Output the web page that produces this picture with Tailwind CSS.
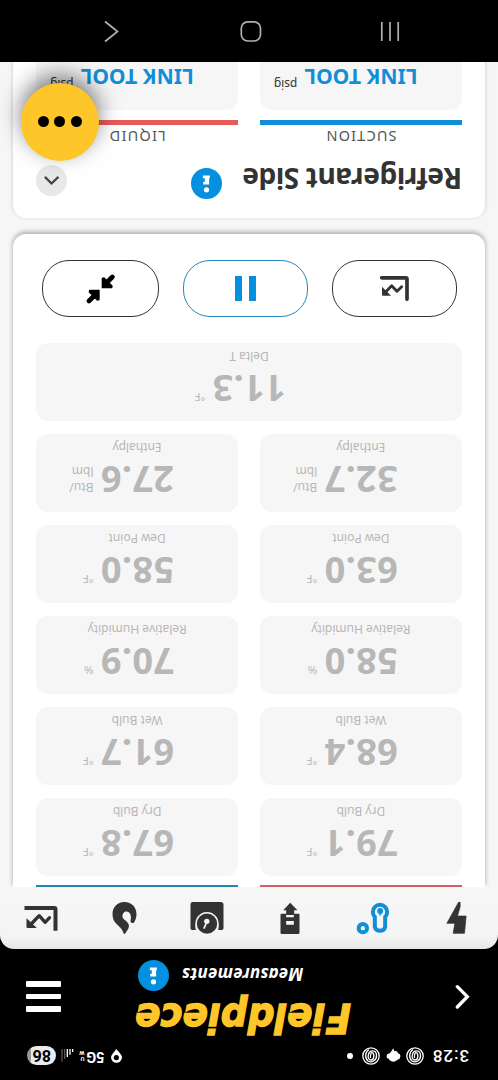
<!DOCTYPE html>
<html lang="en">
<head>
<meta charset="utf-8">
<title>Fieldpiece Measurements</title>
<script src="https://cdn.jsdelivr.net/npm/@tailwindcss/browser@4"></script>
</head>
<body class="bg-black">
<svg class="hidden">
  <symbol id="info" viewBox="573 505 94 94">
    <circle cx="620" cy="552" r="47" fill="#048fdf"/>
    <path fill="#fff" d="M609 528h21v8h-2v19h-18v-8h5v-11h-6z"/>
    <circle cx="620" cy="571" r="8" fill="#fff"/>
  </symbol>
  <symbol id="spiral" viewBox="0 0 18 18">
    <g fill="none" stroke="#fff" stroke-width="1.300"><circle cx="9" cy="9" r="8.200"/><path d="M7 2.500C3 5 2.500 11 6 14C10 16.500 15 13 14.500 8C14 3 8 2.500 6.500 7C5.500 11 7 13 9 13C12 13 12.500 8 11 6C9.500 4.500 8 7 8.500 11"/></g>
  </symbol>
</svg>
<div class="w-[498px] h-[1080px] rotate-180 overflow-hidden bg-black flex flex-col font-['Noto_Sans',sans-serif]">

  <!-- status bar -->
  <div class="h-[40px] shrink-0 pt-[8px] pl-[29px] pr-[27px] flex items-center justify-between text-white">
    <div class="flex items-center">
      <span class="w-[38px] text-[17px] leading-none font-medium tracking-[0.900px] font-[Roboto,sans-serif]">3:28</span>
      <svg class="w-[18px] h-[18px] ml-[6.500px] rotate-180"><use href="#spiral"/></svg>
      <svg class="w-[15px] h-[15px] ml-[5px] rotate-180" viewBox="415 326 46 44"><path fill="#fff" d="M431 336L437 326L441 335Q449 332 452 341Q460 343 459 352Q458 360 450 361Q441 370 430 365Q424 362 424 358Q416 357 417 349Q418 341 426 342Z"/></svg>
      <svg class="w-[18px] h-[18px] ml-[6px] rotate-180"><use href="#spiral"/></svg>
      <span class="size-[6px] rounded-full bg-white ml-[9.500px]"></span>
    </div>
    <div class="flex items-center">
      <svg class="w-[11px] h-[14px] rotate-180" viewBox="327 328 33 42"><path fill="#fff" fill-rule="evenodd" d="M343 328L355 342Q360 348 360 353A16.500 16.500 0 0 1 327 353Q327 348 332 342ZM343 346a8 8 0 1 0 .1 0z"/></svg>
      <span class="ml-[6.500px] w-[18px] text-[14.500px] leading-none font-bold font-[Roboto,sans-serif]">5G</span>
      <span class="ml-[2px] w-[7px] flex flex-col text-[6px] leading-[6.500px] font-bold font-[Roboto,sans-serif]"><span>U</span><span>W</span></span>
      <svg class="w-[13px] h-[13px] ml-[3px] rotate-180" viewBox="185 330 39 39"><path fill="#555" d="M186 330h4v38h-4zM194 330h4v30h-4z"/><path fill="#fff" d="M202 330h4v24h-4zM210 330h4v17h-4zM218 330h4v9h-4z"/></svg>
      <span class="ml-[5px] w-[29.500px] h-[19px] rounded-full bg-linear-to-r from-[#ebebeb] from-85% to-[#999] to-85% text-black text-[16px] leading-[19px] font-bold text-center font-[Roboto,sans-serif]">86</span>
    </div>
  </div>

  <!-- app header -->
  <div class="h-[91px] shrink-0 flex items-start justify-between pl-[28px] pr-[26px]">
    <svg class="w-[15px] h-[25px] mt-[31px] rotate-180" viewBox="621 131 45 75"><path d="M628 139L658 169L628 200" fill="none" stroke="#fff" stroke-width="10" stroke-linecap="round"/></svg>
    <div class="flex flex-col items-center w-[220px] ml-[29px]">
      <svg class="w-[220px] h-[48px] overflow-visible" viewBox="0 0 220 48"><text x="2" y="36" textLength="216" lengthAdjust="spacingAndGlyphs" font-family="'DejaVu Sans',sans-serif" font-weight="bold" font-style="italic" font-size="41" fill="#ffc629" stroke="#ffc629" stroke-width="1.400">Fieldpiece</text></svg>
      <div class="flex items-center w-[220px] pl-[50px] h-[32px]">
        <span class="w-[134px] pt-[3px] text-[17px] leading-[29px] font-bold italic text-white tracking-[0.200px]">Measurements</span>
        <svg class="w-[31px] h-[31px] rotate-180"><use href="#info"/></svg>
      </div>
    </div>
    <div class="flex flex-col gap-[7px] mt-[28px] w-[35px]">
      <span class="h-[5.600px] bg-white rounded-[1px]"></span><span class="h-[5.600px] bg-white rounded-[1px]"></span><span class="h-[5.600px] bg-white rounded-[1px]"></span>
    </div>
  </div>

  <!-- tab bar -->
  <div class="h-[62px] shrink-0 rounded-t-[14px] bg-linear-to-b from-[#e6e6e6] via-[#f4f4f4] via-20% to-[#f7f7f7] grid grid-cols-6 items-center justify-items-center">
    <svg class="size-[36px] rotate-180" viewBox="571.500 60 108 108"><path fill="#333" stroke="#333" stroke-width="2" stroke-linejoin="round" d="M633 67H638V80L630 108H656L651 160H617L622 130H598Z"/></svg>
    <svg class="size-[36px] rotate-180" viewBox="322.500 60 108 108"><g fill="none" stroke="#118fd6"><circle cx="346" cy="144.500" r="12.500" stroke-width="12"/><path stroke-width="12" d="M382 111V141A16 15 0 0 0 413 141V111A21.500 21.500 0 1 0 382 111Z"/></g><circle cx="398" cy="93" r="9" fill="#118fd6"/><path d="M398 96v11" stroke="#118fd6" stroke-width="4"/></svg>
    <svg class="size-[36px] rotate-180" viewBox="73.500 60 108 108"><path fill="#333" fill-rule="evenodd" d="M128 68L150 91H140V101H153Q156 101 156 104V158Q156 162 152 162H103Q99 162 99 158V104Q99 101 102 101H116V91H107ZM116 105V112H139V105ZM116 123V134H139V123Z"/></svg>
    <svg class="size-[36px] rotate-180" viewBox="568.500 60 108 108"><path fill="#333" d="M580 66H664Q672 66 672 74V145Q672 150 667 150H656A35 35 0 1 0 589 150H578Q573 150 573 145V74Q573 66 580 66Z"/><circle cx="622.500" cy="131" r="35" fill="#f6f6f6"/><circle cx="622.500" cy="131" r="30.500" fill="#333"/><circle cx="622" cy="124" r="8" fill="#f6f6f6"/><path d="M622 126L613 146" stroke="#f6f6f6" stroke-width="5"/></svg>
    <svg class="size-[36px] rotate-180" viewBox="319.500 60 108 108"><path fill="#333" d="M374 66C398 66 411 83 411 102C411 113 408 120 403 128Q398 131 393 126C393 118 396 113 393 104C389 94 378 92 372 99C366 107 369 115 377 121C388 130 391 137 386 147L376 162Q372 163 371 157C368 146 360 141 351 132C342 123 339 114 339 102C339 82 354 66 374 66Z"/></svg>
    <svg class="size-[36px] rotate-180" viewBox="70.500 60 108 108"><path d="M81 84H164Q168 84 168 88V146" fill="none" stroke="#333" stroke-width="12" stroke-linecap="square"/><path d="M150 113L137 127L119 107L98 129" fill="none" stroke="#333" stroke-width="10" stroke-linecap="round" stroke-linejoin="round"/><path d="M81 115L112 144H84Q81 144 81 141Z" fill="#333"/></svg>
  </div>

  <!-- scroll area -->
  <div class="h-[825px] shrink-0 bg-[#f6f6f6] overflow-hidden px-[13px] relative">
    <section class="h-[653px] bg-white rounded-b-[13px] shadow-[0_2px_5px_rgba(0,0,0,0.32)] px-[23px]">
      <div class="grid grid-cols-2 gap-x-[22px]">
        <div class="h-[1.500px] bg-[#d5605c]"></div><div class="h-[1.500px] bg-[#2587b0]"></div>
      </div>
      <div id="cells" class="mt-[9.500px] grid grid-cols-2 gap-x-[21.500px] gap-y-[13px] text-[#b8b7b7]"></div>
      <div class="mt-[25.500px] pl-[5px] pr-[6px] flex justify-between">
        <div class="w-[125px] h-[57px] rounded-[27px] border-[1.500px] border-[#333] flex items-center justify-center"><svg class="size-[31px] rotate-180" viewBox="393 144 93 93"><path d="M401 158.500H473Q477 158.500 477 162V223" fill="none" stroke="#333" stroke-width="11" stroke-linecap="round"/><path d="M461 185L447 199L431 182L415 199" fill="none" stroke="#333" stroke-width="8.500" stroke-linecap="round" stroke-linejoin="round"/><path d="M402 185L429 212H405Q402 212 402 209Z" fill="#333"/></svg></div>
        <div class="w-[125px] h-[57px] rounded-[27px] border-[1.500px] border-[#2587c0] flex items-center justify-center gap-[6.500px]"><span class="w-[7.500px] h-[25px] bg-[#048fdf]"></span><span class="w-[7.500px] h-[25px] bg-[#048fdf]"></span></div>
        <div class="w-[117px] h-[57px] rounded-[27px] border-[1.500px] border-[#333] flex items-center justify-center">
          <svg class="w-[30px] h-[30px] rotate-180" viewBox="256 146 90 90"><path d="M338 155L320 173M268 227L286 209" stroke="#000" stroke-width="14" stroke-linecap="round"/><path stroke="#000" stroke-width="4" stroke-linejoin="round" d="M308 159L313 158L337 182L336 187H308ZM298 223L293 224L269 200L270 195H298Z"/></svg>
        </div>
      </div>
    </section>

    <section class="mt-[16px] h-[170px] bg-white rounded-t-[13px] shadow-[0_1px_4px_rgba(0,0,0,0.18)] px-[23px]">
      <div class="flex h-[70px]">
        <h2 class="w-[217px] mt-[19px] text-[28px] leading-[41px] font-bold tracking-[-0.400px] text-[#333] whitespace-nowrap">Refrigerant Side</h2>
        <svg class="w-[31px] h-[31px] mt-[18.500px] ml-[23px] rotate-180"><use href="#info"/></svg>
        <svg class="w-[31px] h-[31px] mt-[22px] ml-auto rotate-180" viewBox="105 495 94 94"><circle cx="152" cy="542" r="47" fill="#e8e8e8"/><path d="M132 531L152 551L173 531" fill="none" stroke="#444" stroke-width="7"/></svg>
      </div>
      <div class="grid grid-cols-2 gap-x-[21.500px] text-[#555] text-center text-[14.500px] leading-[20px] tracking-[1.200px]">
        <div class="h-[28px] pt-[1px] border-b-[5px] border-[#118fd6]">SUCTION</div>
        <div class="h-[28px] pt-[1px] border-b-[5px] border-[#e75a5a]">LIQUID</div>
      </div>
      <div class="mt-[10px] grid grid-cols-2 gap-x-[21.500px]">
        <div class="h-[78px] rounded-[12px] bg-[#f6f6f6] grid grid-cols-[1fr_auto_1fr]"><span></span><span class="mt-[19px] text-[21px] leading-[29px] font-bold text-[#118fd6] whitespace-nowrap">LINK TOOL</span><span class="mt-[18px] pl-[7px] text-[12px] leading-[16px] text-[#333]">psig</span></div>
        <div class="h-[78px] rounded-[12px] bg-[#f6f6f6] grid grid-cols-[1fr_auto_1fr]"><span></span><span class="mt-[19px] text-[21px] leading-[29px] font-bold text-[#118fd6] whitespace-nowrap">LINK TOOL</span><span class="mt-[18px] pl-[7px] text-[12px] leading-[16px] text-[#333]">psig</span></div>
      </div>
    </section>

    <!-- floating action button -->
    <div class="absolute left-[399px] top-[726px] size-[78px] rounded-full bg-[#ffc629] shadow-[0_8px_22px_rgba(0,0,0,0.5)] flex items-center justify-center gap-[5.300px]">
      <span class="size-[11px] rounded-full bg-black"></span><span class="size-[11px] rounded-full bg-black"></span><span class="size-[11px] rounded-full bg-black"></span>
    </div>
  </div>

  <!-- system navigation -->
  <div class="h-[62px] shrink-0">
    <svg class="w-[498px] h-[62px] rotate-180" viewBox="0 0 498 62"><g fill="none" stroke="#b0b0b0" stroke-width="1.700"><path d="M105 21.500L117.500 31.500L105 41.500"/><rect x="241.300" y="21.800" width="19.200" height="19.200" rx="6.500"/><path d="M381.800 22v19M390 22v19M398.200 22v19"/></g></svg>
  </div>
</div>
<script>
const rows = [
  ["79.1","°F","Dry Bulb"],["67.8","°F","Dry Bulb"],
  ["68.4","°F","Wet Bulb"],["61.7","°F","Wet Bulb"],
  ["58.0","%","Relative Humidity"],["70.9","%","Relative Humidity"],
  ["63.0","°F","Dew Point"],["58.0","°F","Dew Point"],
  ["32.7","Btu/<br>lbm","Enthalpy"],["27.6","Btu/<br>lbm","Enthalpy"],
  ["11.3","°F","Delta T"]
];
document.getElementById("cells").innerHTML = rows.map(([v,u,l],i) => `
  <div class="h-[78px] rounded-[12px] bg-[#f6f6f6] ${i===10?"col-span-2":""}">
    <div class="h-[57px] grid grid-cols-[1fr_auto_1fr]">
      <span></span>
      <span class="mt-[9px] text-[36px] leading-[48px] font-bold tracking-[0.400px]">${v}</span>
      <span class="pl-[7px] ${u.length>2?"mt-[17px] text-[12px] leading-[16px]":u==="%"?"mt-[16px] text-[11.500px] leading-[16px]":"mt-[16px] text-[11px] leading-[16px]"}">${u}</span>
    </div>
    <div class="text-center text-[12px] leading-[16px]">${l}</div>
  </div>`).join("");
</script>
</body>
</html>
